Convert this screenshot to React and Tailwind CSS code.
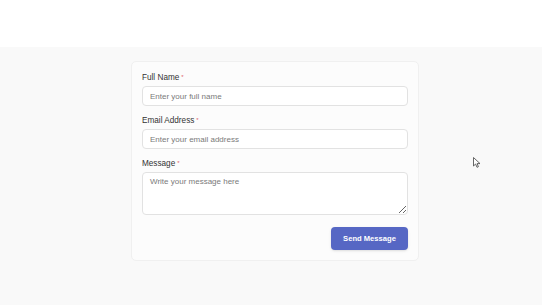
export default function App() {
  return (
    <div
      className="relative min-h-screen w-full bg-[#f9f9f9] flex flex-col overflow-hidden"
      style={{ fontFamily: '"Liberation Sans", Arial, sans-serif' }}
    >
      {/* top band */}
      <div className="h-[47px] bg-white" />

      <div className="pt-[14px] pl-[131px]">
        <form className="w-[288px] rounded-[5px] border border-[#f0f0f0] bg-[#fcfcfc] px-[10px] pt-[10px] pb-[10px] flex flex-col">
          <Field label="Full Name" placeholder="Enter your full name" />
          <Field label="Email Address" placeholder="Enter your email address" className="mt-[9px]" />
          <div className="mt-[9px] flex flex-col">
            <label className="text-[8.2px] leading-[11px] text-[#333] mb-[3px]">
              Message<span className="text-[#e06666] text-[6px] align-top ml-[2px]">*</span>
            </label>
            <textarea
              placeholder="Write your message here"
              className="h-[43px] w-full resize-y rounded-[4px] border border-[#e2e2e2] bg-white px-[7px] py-[3px] text-[8px] text-[#333] placeholder:text-[#7a7a7a] outline-none"
            />
          </div>
          <div className="mt-[12px] flex justify-end">
            <button
              type="button"
              className="h-[23px] w-[77px] rounded-[4px] bg-[#5667c4] text-white text-[7.6px] font-bold shadow-sm"
            >
              Send Message
            </button>
          </div>
        </form>
      </div>

      {/* mouse cursor */}
      <svg
        className="absolute left-[473px] top-[157px]"
        width="8"
        height="11"
        viewBox="0 0 8 11"
      >
        <path d="M0.5 0.5 L0.5 9 L2.6 7 L4 10.3 L5.4 9.7 L4.1 6.6 L7 6.6 Z" fill="#fff" stroke="#555" strokeWidth="0.9" strokeLinejoin="round" />
      </svg>
    </div>
  );
}

function Field({ label, placeholder, className = "" }) {
  return (
    <div className={"flex flex-col " + className}>
      <label className="text-[8.2px] leading-[11px] text-[#333] mb-[3px]">
        {label}
        <span className="text-[#e06666] text-[6px] align-top ml-[2px]">*</span>
      </label>
      <input
        type="text"
        placeholder={placeholder}
        className="h-[20px] w-full rounded-[4px] border border-[#e2e2e2] bg-white px-[7px] text-[8px] text-[#333] placeholder:text-[#7a7a7a] outline-none"
      />
    </div>
  );
}
